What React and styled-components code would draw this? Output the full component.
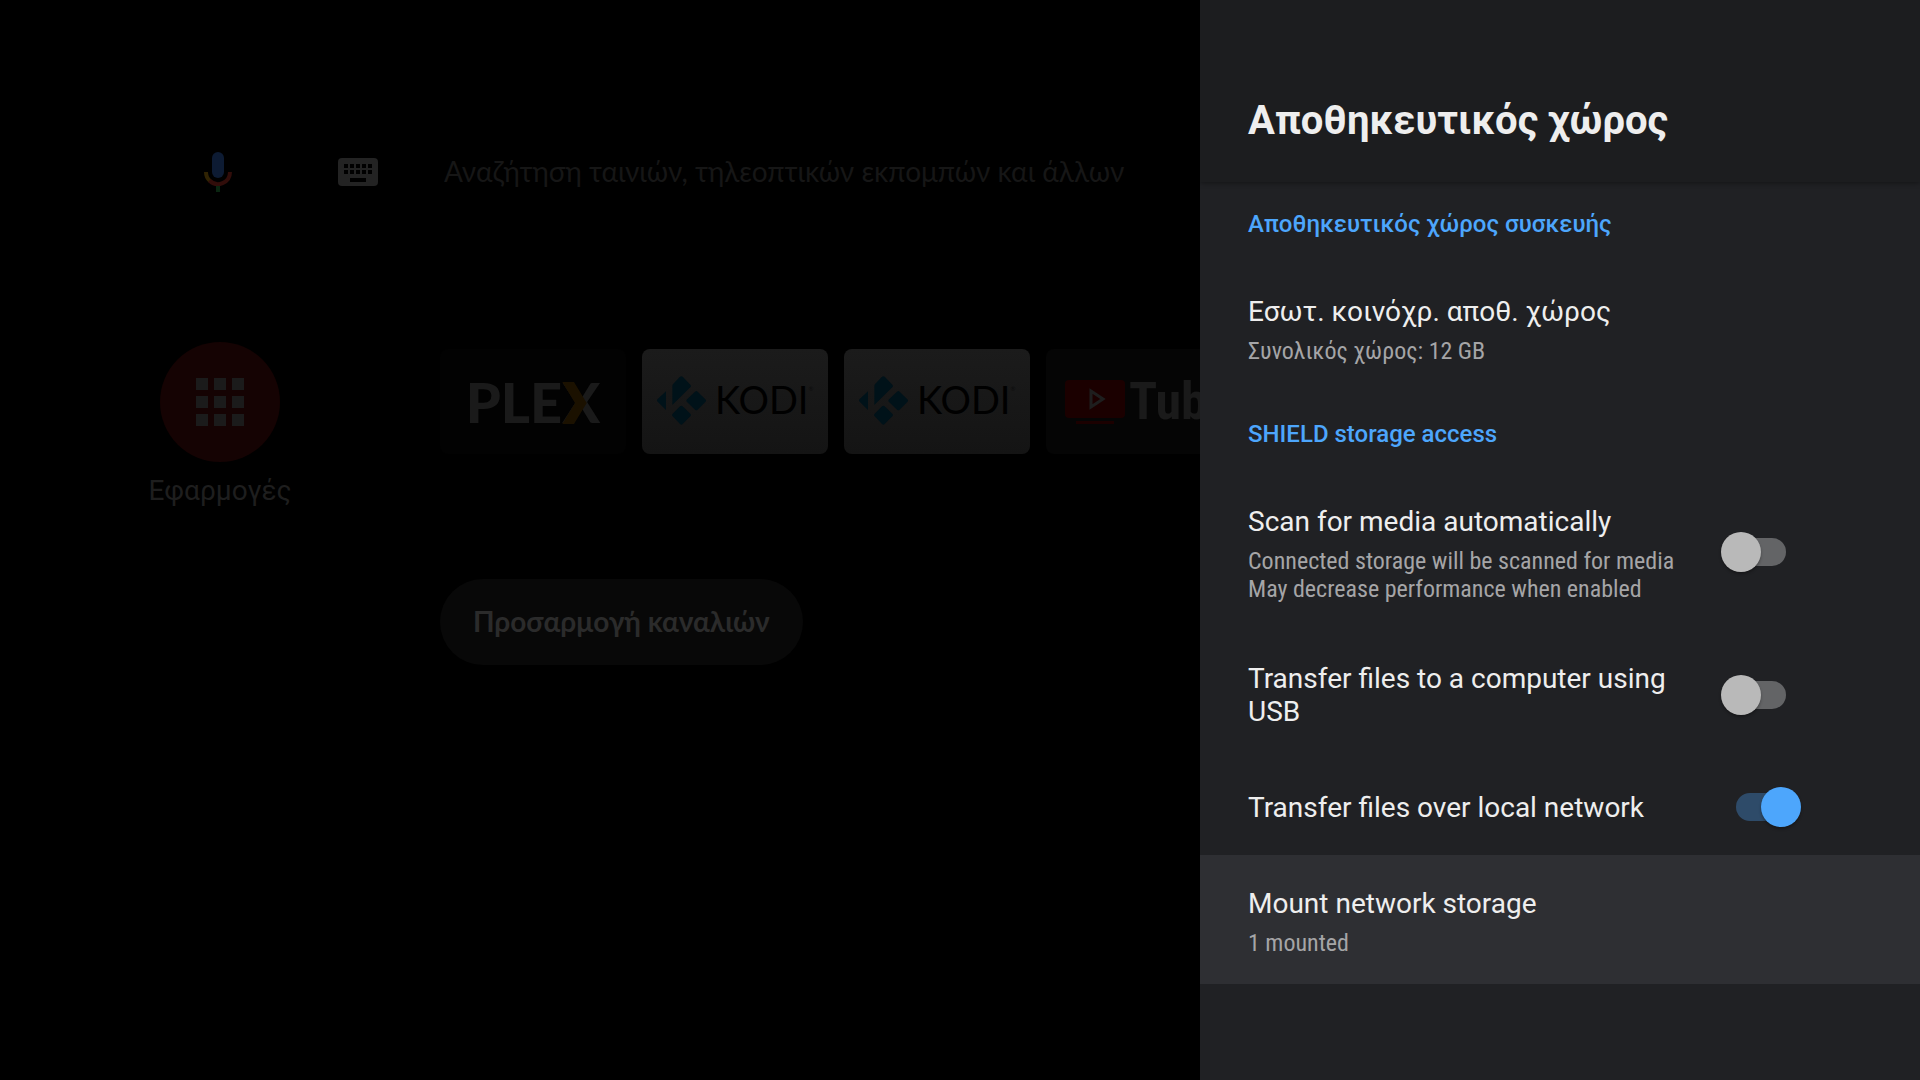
import styled, { createGlobalStyle } from 'styled-components'

const GlobalStyle = createGlobalStyle`
	* {
		box-sizing: border-box;
	}
	body {
		margin: 0;
		background: #000;
		font-family: Roboto, 'Noto Sans', sans-serif;
	}
	button {
		border: 0;
		padding: 0;
		background: transparent;
		color: inherit;
		font: inherit;
		text-align: left;
	}
	h1,
	h2 {
		margin: 0;
	}
	svg {
		flex: none;
	}
`

const Screen = styled.div`
	display: grid;
	grid-template-columns: minmax(0, 5fr) minmax(0, 3fr);
	min-height: 100vh;
	background: #000;
`

/* launcher */

const Launcher = styled.main`
	padding: 142px 0 0 150px;
	overflow: hidden;
`

const SearchBar = styled.form`
	display: flex;
	align-items: center;
	height: 60px;
	padding-left: 44px;
`

const IconButton = styled.button`
	display: flex;
	flex: none;
	margin-right: ${(p) => p.$space}px;
`

const SearchInput = styled.input`
	flex: 1;
	min-width: 0;
	height: 60px;
	border: 0;
	padding: 0 0 2px;
	background: transparent;
	color: #1c1c1c;
	font: 400 28px Lato, 'Open Sans', sans-serif;
	&::placeholder {
		color: #161616;
		opacity: 1;
	}
`

const AppsRow = styled.section`
	display: flex;
	margin-top: 140px;
`

const AppsButton = styled.button`
	display: flex;
	flex: none;
	flex-direction: column;
	align-items: center;
	gap: 12px;
	width: 140px;
	margin-right: 150px;
	color: #1e1e1e;
	font-size: 28px;
	line-height: 33px;
`

const AppsCircle = styled.span`
	display: grid;
	grid-template-columns: repeat(3, 12px);
	grid-auto-rows: 12px;
	gap: 6px;
	place-content: center;
	width: 120px;
	height: 120px;
	border-radius: 50%;
	background: #150303;
`

const Dot = styled.span`
	background: #1b1b1b;
`

const Cards = styled.div`
	display: flex;
	gap: 16px;
	padding-top: 7px;
`

const Card = styled.button`
	display: flex;
	flex: none;
	align-items: center;
	justify-content: ${(p) => p.$align || 'center'};
	gap: ${(p) => p.$gap || 0}px;
	width: 186px;
	height: 105px;
	padding: ${(p) => p.$pad || '0'};
	border-radius: 8px;
	background: ${(p) => p.$bg};
	overflow: hidden;
	white-space: nowrap;
`

const PlexName = styled.span`
	position: relative;
	color: #1a1a1a;
	font: 900 56px/60px Lato, sans-serif;
`

const PlexChevron = styled.svg`
	position: absolute;
	right: 13px;
	top: 10px;
`

const KodiName = styled.span`
	display: flex;
	padding-bottom: 2px;
	color: #000;
	font: 400 38px/48px Lato, sans-serif;
`

const Registered = styled.sup`
	margin-top: 11px;
	color: #0c0c0c;
	font-size: 6px;
	line-height: 6px;
`

const TubeName = styled.span`
	color: #1a1a1a;
	font: 700 52px/60px 'Roboto Condensed', 'Liberation Sans Narrow', sans-serif;
`

const ChannelsButton = styled.button`
	display: block;
	height: 86px;
	margin: 72px 0 0 290px;
	padding: 0 33px 2px;
	border-radius: 43px;
	background: #080808;
	color: #2b2b2b;
	font: 700 28px Lato, 'Open Sans', sans-serif;
`

/* settings panel */

const Panel = styled.aside`
	background: #202124;
	color: #eee;
`

const PanelHeader = styled.header`
	display: flex;
	align-items: center;
	height: 182px;
	padding: 60px 48px 0;
	background: #1c1d1f;
	box-shadow: 0 1px 5px rgba(0, 0, 0, 0.4);
	h1 {
		font-size: 40px;
		font-weight: 700;
		line-height: 48px;
	}
`

const Category = styled.h2`
	padding: 28px 48px 25px;
	color: #4da6fc;
	font-size: 24px;
	font-weight: 500;
	line-height: 28px;
`

const Row = styled.div`
	display: flex;
	align-items: center;
	gap: 24px;
	width: 100%;
	padding: 27px 119px 27px 48px;
	background: ${(p) => (p.$focused ? '#2e2f33' : 'transparent')};
`

const RowText = styled.span`
	flex: 1;
	display: flex;
	flex-direction: column;
	gap: 5px;
`

const RowTitle = styled.span`
	padding: 5px 0 4px;
	font-size: 28px;
	line-height: 33px;
`

const Summary = styled.span`
	color: #a5a5a7;
	font-family: 'Roboto Condensed', 'Liberation Sans Narrow', sans-serif;
	font-size: 24px;
	line-height: 28px;
	white-space: pre-line;
`

const Switch = styled.input`
	appearance: none;
	position: relative;
	flex: none;
	width: 80px;
	height: 40px;
	margin: 0;
	&::before,
	&::after {
		content: '';
		position: absolute;
	}
	&::before {
		inset: 6px 15px;
		border-radius: 14px;
		background: #636466;
	}
	&::after {
		top: 0;
		left: 0;
		width: 40px;
		height: 40px;
		border-radius: 50%;
		background: #b9b9b9;
		box-shadow: 0 2px 3px rgba(0, 0, 0, 0.3);
	}
	&:checked::before {
		background: #2e4b69;
	}
	&:checked::after {
		left: 40px;
		background: #4da6fc;
	}
`

const MicIcon = () => (
	<svg width="48" height="48" viewBox="0 0 48 48" fill="none" aria-hidden="true">
		<rect x="18" y="4" width="12" height="26" rx="6" fill="#0d1b33" />
		<path d="M12 24a12 12 0 0 0 4 9" stroke="#302303" strokeWidth="4" />
		<path d="M15.500 32.500A12 12 0 0 0 36 24" stroke="#310d0a" strokeWidth="4" />
		<path d="M24 38v6" stroke="#0a2611" strokeWidth="4" />
	</svg>
)

const KeyboardIcon = () => (
	<svg width="48" height="48" viewBox="0 0 48 48" aria-hidden="true">
		<rect x="4" y="10" width="40" height="28" rx="4" fill="#232323" />
		{[10, 16, 22, 28, 34].map((x) => (
			<path key={x} d={`M${x} 16h4v4h-4zM${x} 22h4v4h-4z`} fill="#000" />
		))}
		<path d="M16 30h16v4H16z" fill="#000" />
	</svg>
)

const KodiCard = () => (
	<Card $bg="linear-gradient(#1b1b1b, #141414)" $align="flex-start" $gap={9} $pad="0 0 3px 15px">
		<svg width="49" height="49" viewBox="51 106 147 147" fill="#001219" aria-hidden="true">
			<path d="M119 109q5-5 10 0l22 23q4 4 0 8l-54 53v-58q0-3 3-6z" />
			<path d="M78 152v56l-25-25q-4-4 0-8z" />
			<path d="M165 153q4-4 8 0l23 23q4 4 0 8l-23 23q-4 4-8 0l-24-23q-4-4 0-8z" />
			<path d="M120 197q4-4 8 0l23 22q4 4 0 8l-23 23q-4 4-8 0l-22-23q-4-4 0-8z" />
		</svg>
		<KodiName>
			KODI<Registered>®</Registered>
		</KodiName>
	</Card>
)

const settings = [
	{
		category: 'Αποθηκευτικός χώρος συσκευής',
		items: [{ title: 'Εσωτ. κοινόχρ. αποθ. χώρος', summary: 'Συνολικός χώρος: 12 GB' }]
	},
	{
		category: 'SHIELD storage access',
		items: [
			{
				title: 'Scan for media automatically',
				summary: 'Connected storage will be scanned for media\nMay decrease performance when enabled',
				on: false
			},
			{ title: 'Transfer files to a computer using USB', on: false },
			{ title: 'Transfer files over local network', on: true },
			{ title: 'Mount network storage', summary: '1 mounted', focused: true }
		]
	}
]

const Setting = ({ title, summary, on, focused }) => {
	const hasSwitch = on !== undefined
	return (
		<Row as={hasSwitch ? 'label' : 'button'} $focused={focused}>
			<RowText>
				<RowTitle>{title}</RowTitle>
				{summary && <Summary>{summary}</Summary>}
			</RowText>
			{hasSwitch && <Switch type="checkbox" role="switch" defaultChecked={on} />}
		</Row>
	)
}

const App = () => (
	<Screen>
		<GlobalStyle />
		<Launcher>
			<SearchBar>
				<IconButton type="button" aria-label="Φωνητική αναζήτηση" $space={92}>
					<MicIcon />
				</IconButton>
				<IconButton type="button" aria-label="Πληκτρολόγιο" $space={62}>
					<KeyboardIcon />
				</IconButton>
				<SearchInput
					aria-label="Αναζήτηση"
					placeholder="Αναζήτηση ταινιών, τηλεοπτικών εκπομπών και άλλων"
				/>
			</SearchBar>

			<AppsRow>
				<AppsButton>
					<AppsCircle>
						{Array.from({ length: 9 }, (_, i) => (
							<Dot key={i} />
						))}
					</AppsCircle>
					Εφαρμογές
				</AppsButton>
				<Cards>
					<Card $bg="#020202">
						<PlexName>
							PLEX
							<PlexChevron width="25" height="42" viewBox="0 0 25 43" aria-hidden="true">
								<path d="M0 0h12l13 21.500L12 43H0l13-21.500z" fill="#1b1100" />
							</PlexChevron>
						</PlexName>
					</Card>
					<KodiCard />
					<KodiCard />
					<Card $bg="#050505" $align="flex-start" $gap={4} $pad="0 0 0 19px">
						<svg width="60" height="44" viewBox="0 0 60 44" aria-hidden="true">
							<rect width="60" height="38" rx="4" fill="#1b0000" />
							<path d="M11 41h38v3H11z" fill="#1b0000" />
							<path d="M26 11v16l12-8z" fill="none" stroke="#1e1e1e" strokeWidth="3" />
						</svg>
						<TubeName>Tube</TubeName>
					</Card>
				</Cards>
			</AppsRow>

			<ChannelsButton>Προσαρμογή καναλιών</ChannelsButton>
		</Launcher>

		<Panel>
			<PanelHeader>
				<h1>Αποθηκευτικός χώρος</h1>
			</PanelHeader>
			{settings.map(({ category, items }) => (
				<section key={category}>
					<Category>{category}</Category>
					{items.map((item) => (
						<Setting key={item.title} {...item} />
					))}
				</section>
			))}
		</Panel>
	</Screen>
)

export default App
